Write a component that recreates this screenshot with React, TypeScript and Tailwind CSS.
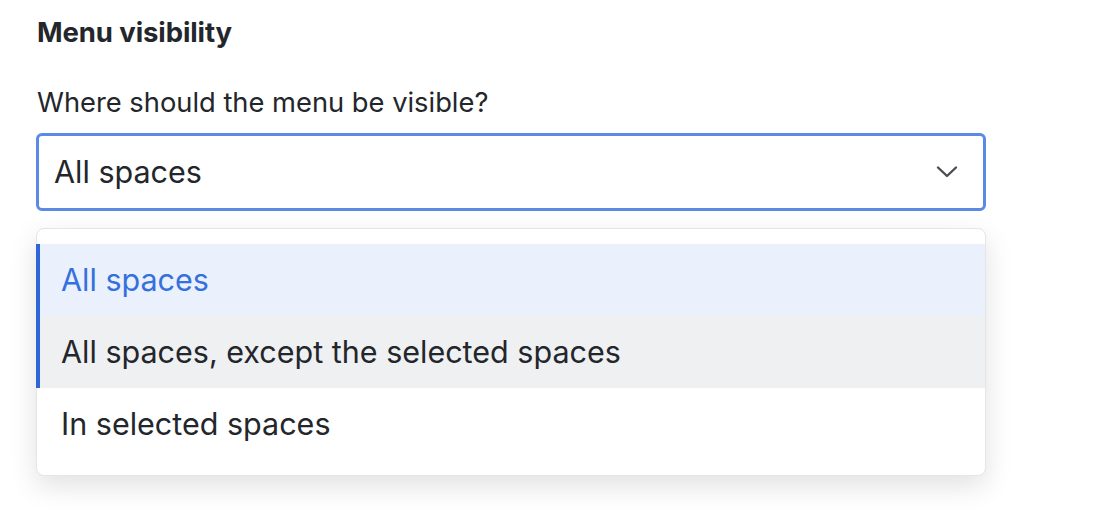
import { useState } from 'react'

const options = [
  'All spaces',
  'All spaces, except the selected spaces',
  'In selected spaces',
]

export default function App() {
  const [selected] = useState(0)
  const [hovered] = useState(1)

  return (
    <div className="min-h-[510px] bg-white pl-[36px] pt-[16px] text-[#23262b] font-['Inter',sans-serif]">
      <h2 className="text-[27.5px] leading-[32px] font-bold pl-[1px] tracking-[-0.1px]">Menu visibility</h2>

      <label className="block mt-[37px] text-[27.3px] leading-[36px] pl-[1px]">
        Where should the menu be visible?
      </label>

      <div className="mt-[12px] w-[950px]">
        <button className="flex h-[78px] w-full items-center justify-between rounded-[6px] border-[3px] border-[#5a8ae3] bg-white pl-[15px] pr-[25px] text-left">
          <span className="text-[30.5px] leading-[36px]">{options[selected]}</span>
          <svg width="22" height="14" viewBox="0 0 22 14" fill="none">
            <path d="M2 2.5l9 8.5 9-8.5" stroke="#4a4d52" strokeWidth="2.4" strokeLinecap="round" strokeLinejoin="round" />
          </svg>
        </button>

        {/* open menu */}
        <ul className="mt-[17px] rounded-[8px] border border-[#e4e5e7] bg-white py-[15px] shadow-[0_10px_28px_rgba(0,0,0,0.12)]">
          {options.map((o, i) => {
            const isSel = i === selected
            const isHover = i === hovered
            const marked = isSel || isHover
            return (
              <li
                key={o}
                className={
                  '-ml-px flex h-[72px] items-center pl-[21px] text-[30.5px] leading-[36px] border-l-4 ' +
                  (marked ? 'border-[#2f67d8] ' : 'border-transparent ') +
                  (isSel ? 'bg-[#eaf0fc] text-[#3670dc]' : isHover ? 'bg-[#eff0f2]' : '')
                }
              >
                {o}
              </li>
            )
          })}
        </ul>
      </div>
    </div>
  )
}
